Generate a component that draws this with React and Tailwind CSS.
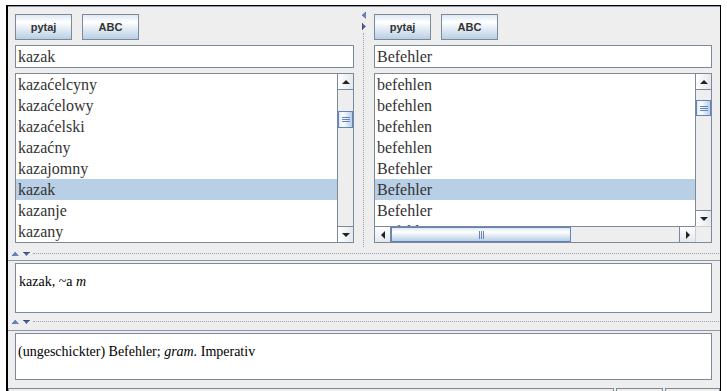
import React from "react";

const SERIF = "font-['Liberation_Serif',serif]";

function Btn({ children }) {
  return (
    <div className="w-[57px] h-[26px] border border-[#7a8a99] bg-[linear-gradient(to_bottom,#dde8f3_0%,#ffffff_30%,#b8cfe5_100%)] flex items-center justify-center font-['Liberation_Sans',sans-serif] font-bold text-[11px] text-[#333333]">
      {children}
    </div>
  );
}

function Field({ children }) {
  return (
    <div className={`h-[23px] border border-[#7a8a99] bg-white pl-[2px] flex items-center text-[16px] text-[#333333] ${SERIF}`}>
      {children}
    </div>
  );
}

function UpTri() {
  return <div className="w-0 h-0 border-x-[4px] border-x-transparent border-b-[4px] border-b-[#222222]" />;
}
function DownTri() {
  return <div className="w-0 h-0 border-x-[4px] border-x-transparent border-t-[4px] border-t-[#222222]" />;
}
function LeftTri() {
  return <div className="w-0 h-0 border-y-[4px] border-y-transparent border-r-[4px] border-r-[#222222]" />;
}
function RightTri() {
  return <div className="w-0 h-0 border-y-[4px] border-y-transparent border-l-[4px] border-l-[#222222]" />;
}

function VScroll({ thumb }) {
  return (
    <div className="w-[16px] shrink-0 flex flex-col border-l border-[#7a8a99] bg-[#eeeeee]">
      <div className="h-[16px] shrink-0 border-b border-[#7a8a99] bg-[linear-gradient(to_right,#ffffff,#e3e8ee)] flex items-center justify-center">
        <UpTri />
      </div>
      <div className="flex-1 relative">
        <div className={`absolute left-0 right-0 border border-[#6382bf] bg-[linear-gradient(to_right,#dde8f3_0%,#ffffff_30%,#b8cfe5_100%)] flex flex-col items-center justify-center gap-[1px] ${thumb}`}>
          <div className="w-[8px] h-px bg-[#6382bf]" />
          <div className="w-[8px] h-px bg-[#6382bf]" />
          <div className="w-[8px] h-px bg-[#6382bf]" />
        </div>
      </div>
      <div className="h-[16px] shrink-0 border-t border-[#7a8a99] bg-[linear-gradient(to_right,#ffffff,#e3e8ee)] flex items-center justify-center">
        <DownTri />
      </div>
    </div>
  );
}

function HScroll() {
  return (
    <div className="h-[16px] flex-1 flex border-t border-[#7a8a99] bg-[#eeeeee]">
      <div className="w-[16px] shrink-0 border-r border-[#7a8a99] bg-[linear-gradient(to_bottom,#ffffff,#e3e8ee)] flex items-center justify-center">
        <LeftTri />
      </div>
      <div className="flex-1 relative">
        <div className="absolute top-0 bottom-0 left-0 w-[180px] border border-[#6382bf] bg-[linear-gradient(to_bottom,#dde8f3_0%,#ffffff_30%,#b8cfe5_100%)] flex items-center justify-center gap-[1px]">
          <div className="h-[8px] w-px bg-[#6382bf]" />
          <div className="h-[8px] w-px bg-[#6382bf]" />
          <div className="h-[8px] w-px bg-[#6382bf]" />
        </div>
      </div>
      <div className="w-[16px] shrink-0 border-l border-[#7a8a99] bg-[linear-gradient(to_bottom,#ffffff,#e3e8ee)] flex items-center justify-center">
        <RightTri />
      </div>
    </div>
  );
}

function Row({ text, sel }) {
  return (
    <div className={`h-[21px] shrink-0 leading-[21px] pl-[2px] whitespace-nowrap text-[16px] text-[#333333] ${SERIF} ${sel ? "bg-[#b8cfe5]" : ""}`}>
      {text}
    </div>
  );
}

const leftRows = ["kazaćelcyny", "kazaćelowy", "kazaćelski", "kazaćny", "kazajomny", "kazak", "kazanje", "kazany"];
const rightRows = ["befehlen", "befehlen", "befehlen", "befehlen", "Befehler", "Befehler", "Befehler", "Befehler"];

function HSplitArrows() {
  return (
    <div className="flex items-center gap-[4px] shrink-0">
      <svg width="7" height="4" viewBox="0 0 7 4">
        <polygon points="0,4 3.5,0 7,4" fill="#6382bf" />
        <line x1="0" y1="4" x2="3.5" y2="0" stroke="#3d5a8f" strokeWidth="0.8" />
      </svg>
      <svg width="7" height="4" viewBox="0 0 7 4">
        <polygon points="0,0 7,0 3.5,4" fill="#4a64a0" />
        <line x1="0" y1="0" x2="7" y2="0" stroke="#23324f" strokeWidth="1" />
      </svg>
    </div>
  );
}

function HSplitter({ h }) {
  return (
    <div className={`flex items-center pl-[4px] pr-[1px] ${h}`}>
      <HSplitArrows />
      <div className="flex-1 ml-[3px] border-t border-dotted border-[#97a6b8]" />
    </div>
  );
}

export default function App() {
  return (
    <div className="w-[727px] h-[391px] overflow-hidden bg-white pt-[5px] pl-[6px]">
      <div className="w-[715px] h-[400px] border-t border-t-black border-l-2 border-l-black border-r border-r-black bg-[#eeeeee] flex flex-col">
        <div className="h-px bg-[#8c99a7] shrink-0" />
        {/* top section */}
        <div className="h-[240px] shrink-0 flex">
          {/* left panel */}
          <div className="w-[352px] shrink-0 pl-[7px] pt-[7px] flex flex-col">
            <div className="flex gap-[10px]">
              <Btn>pytaj</Btn>
              <Btn>ABC</Btn>
            </div>
            <div className="mt-[5px] w-[339px]">
              <Field>kazak</Field>
            </div>
            <div className="mt-[5px] w-[339px] h-[170px] border border-[#7a8a99] bg-white flex">
              <div className="flex-1 flex flex-col overflow-hidden">
                {leftRows.map((t, i) => (
                  <Row key={i} text={t} sel={i === 5} />
                ))}
              </div>
              <VScroll thumb="top-[21px] h-[17px]" />
            </div>
          </div>
          {/* vertical splitter */}
          <div className="w-[7px] shrink-0 flex flex-col items-center pt-[5px]">
            <svg width="4" height="7" viewBox="0 0 4 7" className="shrink-0">
              <polygon points="4,0 0,3.5 4,7" fill="#6382bf" />
              <line x1="4" y1="0" x2="0" y2="3.5" stroke="#3d5a8f" strokeWidth="0.8" />
            </svg>
            <svg width="4" height="7" viewBox="0 0 4 7" className="shrink-0 mt-[4px]">
              <polygon points="0,0 4,3.5 0,7" fill="#4a64a0" />
              <line x1="0" y1="0" x2="0" y2="7" stroke="#23324f" strokeWidth="1" />
            </svg>
            <div className="flex-1 mt-[3px] border-l border-dotted border-[#97a6b8]" />
          </div>
          {/* right panel */}
          <div className="flex-1 pl-[7px] pt-[7px] flex flex-col">
            <div className="flex gap-[10px]">
              <Btn>pytaj</Btn>
              <Btn>ABC</Btn>
            </div>
            <div className="mt-[5px] w-[338px]">
              <Field>Befehler</Field>
            </div>
            <div className="mt-[5px] w-[338px] h-[170px] border border-[#7a8a99] bg-white flex flex-col">
              <div className="flex-1 flex min-h-0">
                <div className="flex-1 flex flex-col overflow-hidden">
                  {rightRows.map((t, i) => (
                    <Row key={i} text={t} sel={i === 5} />
                  ))}
                </div>
                <VScroll thumb="top-[10px] h-[16px]" />
              </div>
              <div className="flex shrink-0">
                <HScroll />
                <div className="w-[16px] h-[16px] bg-[#eeeeee] border-t border-l border-[#c8cfd6]" />
              </div>
            </div>
          </div>
        </div>

        <HSplitter h="h-[13px] shrink-0" />
        <div className="h-px bg-[#8c99a7] shrink-0" />
        <div className="h-[2px] shrink-0" />
        <div className="h-[50px] shrink-0 ml-[7px] w-[697px] border border-[#7a8a99] bg-white pl-[3px] pt-[7px]">
          <div className={`text-[14px] text-black ${SERIF}`}>
            kazak, ~a <i>m</i>
          </div>
        </div>
        <HSplitter h="h-[17px] shrink-0" />
        <div className="h-px bg-[#8c99a7] shrink-0" />
        <div className="h-[2px] shrink-0" />
        <div className="h-[47px] shrink-0 ml-[7px] w-[697px] border border-[#7a8a99] bg-white pl-[2px] pt-[7px]">
          <div className={`text-[14px] text-black ${SERIF}`}>
            (ungeschickter) Befehler; <i>gram.</i> Imperativ
          </div>
        </div>
        <div className="h-[8px] shrink-0" />
        <div className="h-[12px] shrink-0 flex gap-[2px]">
          <div className="w-[606px] border border-[#7a8a99]" />
          <div className="w-[47px] border border-[#7a8a99]" />
          <div className="flex-1 border border-[#7a8a99]" />
        </div>
      </div>
    </div>
  );
}
